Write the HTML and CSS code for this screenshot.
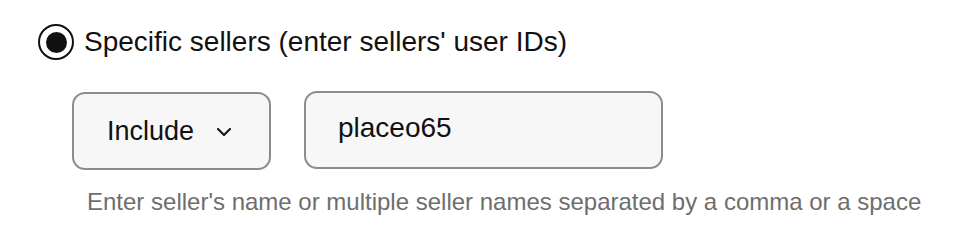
FILE: index.html
```html
<!DOCTYPE html>
<html>
<head>
<meta charset="utf-8">
<link rel="stylesheet" href="styles.css">
</head>
<body>
<div class="page">
  <label class="radio-row">
    <span class="radio"><span class="radio-dot"></span></span>
    <span class="radio-label">Specific sellers (enter sellers' user IDs)</span>
  </label>
  <div class="fields">
    <div class="controls">
      <div class="select">
        <span class="select-text">Include</span>
        <svg class="chevron" width="16" height="10" viewBox="0 0 16 10"><path d="M2 2 L8 8 L14 2" fill="none" stroke="#1a1a1a" stroke-width="2.2" stroke-linecap="round" stroke-linejoin="round"/></svg>
      </div>
      <div class="input"><span class="input-text">placeo65</span></div>
    </div>
    <div class="helper">Enter seller's name or multiple seller names separated by a comma or a space</div>
  </div>
</div>
</body>
</html>
```
FILE: styles.css
```css
html, body {
  margin: 0;
  padding: 0;
  background: #ffffff;
}
.page {
  font-family: "Liberation Sans", Arial, sans-serif;
  color: #111111;
  padding: 24px 0 0 38px;
}
.radio-row {
  display: flex;
  align-items: center;
  gap: 10px;
  height: 36px;
}
.radio {
  box-sizing: border-box;
  width: 36px;
  height: 36px;
  border: 2.5px solid #111111;
  border-radius: 50%;
  display: flex;
  align-items: center;
  justify-content: center;
}
.radio-dot {
  width: 21px;
  height: 21px;
  border-radius: 50%;
  background: #111111;
}
.radio-label {
  font-size: 28px;
  line-height: 36px;
}
.fields {
  padding: 31px 0 0 34px;
}
.controls {
  display: flex;
  gap: 33px;
  align-items: flex-start;
}
.select {
  box-sizing: border-box;
  width: 199px;
  height: 78px;
  border: 2px solid #8c8c8c;
  border-radius: 13px;
  background: #f7f7f7;
  display: flex;
  align-items: center;
  padding-left: 33px;
  margin-top: 1px;
}
.select-text {
  font-size: 27px;
}
.chevron {
  margin-left: 22px;
  margin-top: 2px;
}
.input {
  box-sizing: border-box;
  width: 359px;
  height: 78px;
  border: 2px solid #8c8c8c;
  border-radius: 13px;
  background: #f7f7f7;
  display: flex;
  align-items: center;
  padding-left: 32px;
  padding-bottom: 4px;
}
.input-text {
  font-size: 28px;
}
.helper {
  margin-top: 18px;
  padding-left: 15px;
  font-size: 24px;
  color: #6e6e6e;
}
```
